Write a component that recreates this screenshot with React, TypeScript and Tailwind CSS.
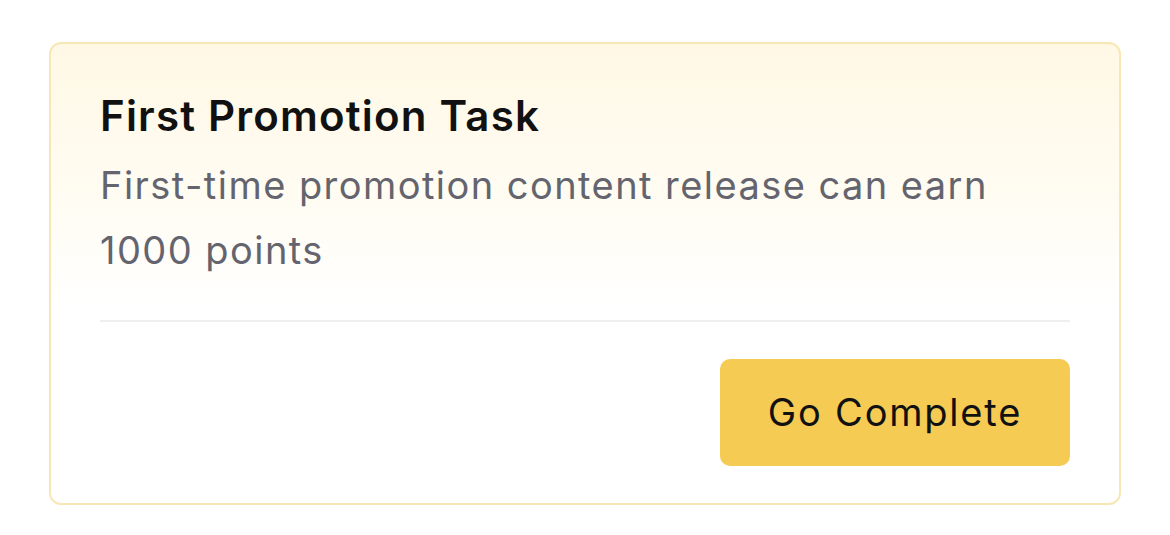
import React from "react";

export default function App() {
  return (
    <div className="min-h-[535px] w-full bg-white pt-[42px]" style={{ fontFamily: "Inter, 'Noto Sans', sans-serif" }}>
      <div className="mx-auto box-border w-[1072px] rounded-[12px] border-2 border-[#F8E7B6] bg-[linear-gradient(180deg,#FFF8E5_0%,#FFFCF3_35%,#FFFFFF_58%)] px-[49px] pb-[37px] pt-[46px]">
        <div className="text-[42px] font-semibold leading-[52px] tracking-[1.2px] text-[#111111]">First Promotion Task</div>
        <div className="mt-[11px] text-[38px] leading-[65px] tracking-[1.45px] text-[#64646F]">
          First-time promotion content release can earn
          <br />
          1000 points
        </div>
        <div className="mt-[37px] h-[2px] bg-[#EFEFF2]" />
        <div className="mt-[37px] flex justify-end">
          <button className="flex h-[107px] w-[350px] items-center justify-center rounded-[10px] bg-[#F5CB53] text-[38px] tracking-[1.8px] text-[#111111]">
            Go Complete
          </button>
        </div>
      </div>
    </div>
  );
}
